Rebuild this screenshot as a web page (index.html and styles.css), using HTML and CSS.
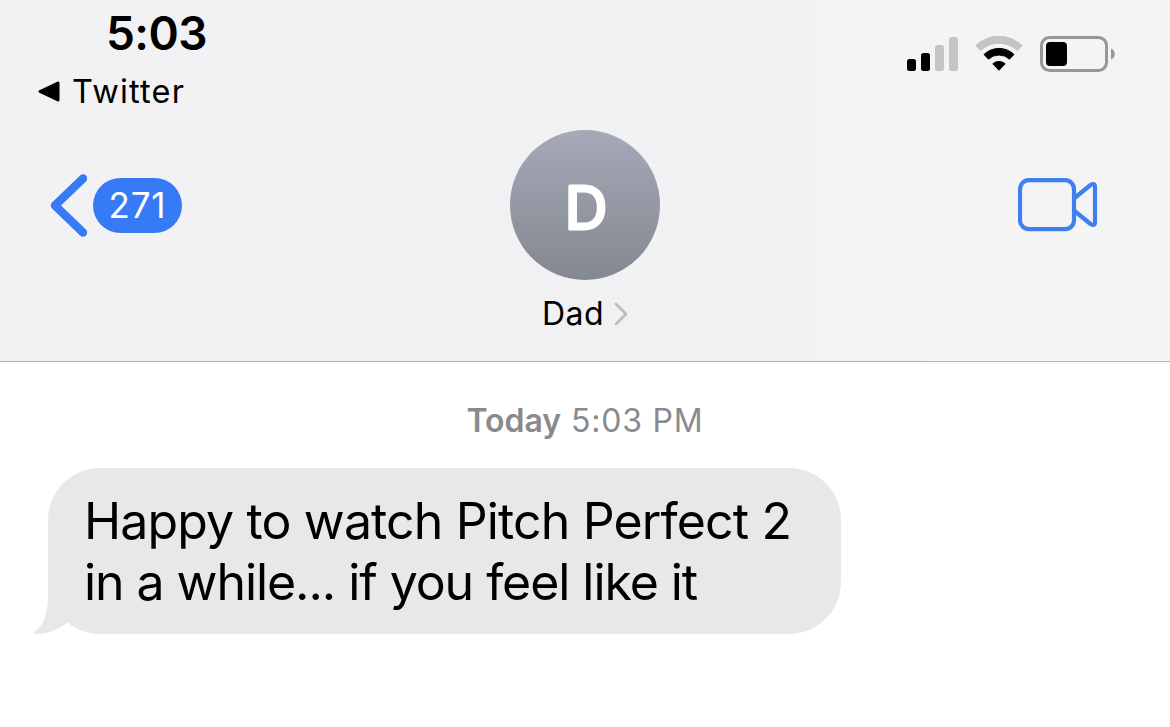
FILE: index.html
```
<!DOCTYPE html>
<html lang="en">
<head>
    <meta charset="UTF-8">
    <meta name="viewport" content="width=device-width, initial-scale=1.0">
    <title>Messages</title>
    <link rel="stylesheet" href="styles.css">
</head>
<body>

    <header class="header">
        <div class="status-bar">
            <div class="status-left">
                <div class="time">5:03</div>
                <div class="back-app">
                    <svg width="22" height="22" viewBox="0 0 22 22">
                        <path d="M2 10.500L20 2V19Z" stroke="#000" stroke-width="3" stroke-linejoin="round"/>
                    </svg>
                    <span>Twitter</span>
                </div>
            </div>
            <div class="status-icons">
                <svg width="52" height="35" viewBox="0 0 52 35">
                    <rect x="0" y="23" width="9" height="12" rx="2.5"/>
                    <rect x="14" y="17" width="9" height="18" rx="2.5"/>
                    <rect x="28" y="9" width="9" height="26" rx="2.5" fill="#c4c4c4"/>
                    <rect x="42" y="1" width="9" height="34" rx="2.5" fill="#c4c4c4"/>
                </svg>
                <svg class="wifi" width="48" height="36" viewBox="0 0 48 36">
                    <path d="M0.800 9.600a33.500 33.500 0 0 1 46.400 0L42.400 14.500a27 27 0 0 0-36.800 0Z" fill="#c4c4c4" stroke="#c4c4c4" stroke-linejoin="round"/>
                    <path d="M9 18.500a21.500 21.500 0 0 1 30 0L34.400 23.200a15 15 0 0 0-20.800 0Z" stroke="#000" stroke-linejoin="round"/>
                    <path d="M17.800 27.800a9.400 9.400 0 0 1 12.400 0L24 34.300Z" stroke="#000" stroke-linejoin="round"/>
                </svg>
                <svg width="76" height="36" viewBox="0 0 76 36">
                    <rect x="1.5" y="1.5" width="65" height="33" rx="8" fill="none" stroke="#979797" stroke-width="3"/>
                    <rect x="6" y="6" width="21" height="24" rx="4"/>
                    <path d="M71 12.5c5 1.8 5 9.2 0 11Z" fill="#979797"/>
                </svg>
            </div>
        </div>

        <nav class="nav">
            <div class="back">
                <svg width="38" height="64" viewBox="0 0 38 64">
                    <path d="M34 4.5L6 31.5L34 58.5" fill="none" stroke="#367bf5" stroke-width="8.5" stroke-linecap="round" stroke-linejoin="round"/>
                </svg>
                <span class="badge">271</span>
            </div>
            <div class="contact">
                <svg class="avatar" width="150" height="150" viewBox="0 0 150 150">
                    <text class="initial" x="76" y="98.5" text-anchor="middle">D</text>
                </svg>
                <div class="contact-name">
                    <span>Dad</span>
                    <svg width="14" height="24" viewBox="0 0 14 24">
                        <path d="M2 2L12 12L2 22" fill="none" stroke="#bdbdc0" stroke-width="2.8" stroke-linecap="round" stroke-linejoin="round"/>
                    </svg>
                </div>
            </div>
            <div class="video">
                <svg width="80" height="54" viewBox="0 0 80 54">
                    <rect x="2" y="2.2" width="54" height="49" rx="9"/>
                    <path d="M56 20.5L72.500 7Q77 4.400 77 9V44Q77 48.600 72.500 46L56 32.5"/>
                </svg>
            </div>
        </nav>
    </header>

    <main class="messages">
        <div class="timestamp"><b>Today</b> 5:03 PM</div>
        <div class="bubble">
            <span class="line-one">Happy to watch Pitch Perfect 2</span><br>
            <span class="line-two">in a while... if you feel like it</span>
            <svg class="tail" width="42" height="46" viewBox="0 0 42 46">
                <path d="M16 0C16.5 24 13 38 0 45.5C14 47 27 42 35.5 34L40 28V0Z" fill="#e8e8ea"/>
            </svg>
        </div>
    </main>

</body>
</html>
```
FILE: styles.css
```
* {
    margin: 0;
    padding: 0;
    box-sizing: border-box;
}

body {
    font-family: Inter, "Liberation Sans", sans-serif;
    background-color: #fff;
    color: #000;
    height: 727px;
    overflow: hidden;
}

svg {
    display: block;
    flex-shrink: 0;
}

.header {
    height: 362px;
    background: linear-gradient(90deg, #f2f2f3, #f1f1f3 50%, #f4f4f4 80%);
    border-bottom: 1px solid #b3b3b5;
}

.status-bar {
    display: flex;
    justify-content: space-between;
    height: 130px;
    padding: 8px 54px 0 38px;
}

.time {
    padding-left: 68px;
    font-size: 46px;
    font-weight: 600;
    line-height: 50px;
    letter-spacing: -0.6px;
}

.back-app {
    display: flex;
    align-items: center;
    gap: 12px;
    margin-top: 14px;
    font-size: 32.5px;
    line-height: 40px;
    letter-spacing: 1.2px;
}

.status-icons {
    display: flex;
    height: 36px;
    margin-top: 28px;
}

.wifi {
    margin: 0 17px 0 16px;
}

.nav {
    display: grid;
    grid-template-columns: 1fr 150px 1fr;
    padding: 0 49px;
}

.back {
    display: flex;
    align-items: center;
    gap: 6px;
    height: 151px;
}

.badge {
    width: 89px;
    height: 55px;
    border-radius: 28px;
    background-color: #367bf5;
    color: #fff;
    font-size: 35px;
    line-height: 55px;
    letter-spacing: 0.8px;
    text-align: center;
}

.contact {
    display: flex;
    flex-direction: column;
    align-items: center;
}

.avatar {
    border-radius: 50%;
    background: linear-gradient(#a5a9b8, #848890);
}

.initial {
    font-size: 59px;
    font-weight: 400;
    fill: #fff;
    stroke: #fff;
    stroke-width: 3.2px;
    stroke-linejoin: round;
}

.contact-name {
    display: flex;
    align-items: center;
    gap: 10px;
    margin-top: 14px;
    font-size: 32px;
    line-height: 40px;
    letter-spacing: 0.4px;
}

.video {
    display: flex;
    align-items: center;
    justify-content: flex-end;
    height: 150px;
    padding-right: 23px;
}

.video svg {
    fill: none;
    stroke: #3f7fee;
    stroke-width: 4.2px;
    stroke-linejoin: round;
}

.timestamp {
    padding-top: 39px;
    color: #8a8a8d;
    font-size: 32px;
    line-height: 40px;
    letter-spacing: 0.8px;
    text-align: center;
}

.timestamp b {
    font-weight: 600;
    letter-spacing: 0;
}

.bubble {
    position: relative;
    width: 793px;
    height: 166px;
    margin: 27px 0 0 48px;
    padding: 23px 0 0 36px;
    border-radius: 52px;
    background-color: #e8e8ea;
    font-size: 50px;
    line-height: 61px;
    white-space: nowrap;
}

.line-one {
    letter-spacing: -0.86px;
}

.line-two {
    letter-spacing: -1.06px;
}

.tail {
    position: absolute;
    left: -16px;
    bottom: 0;
}
```
